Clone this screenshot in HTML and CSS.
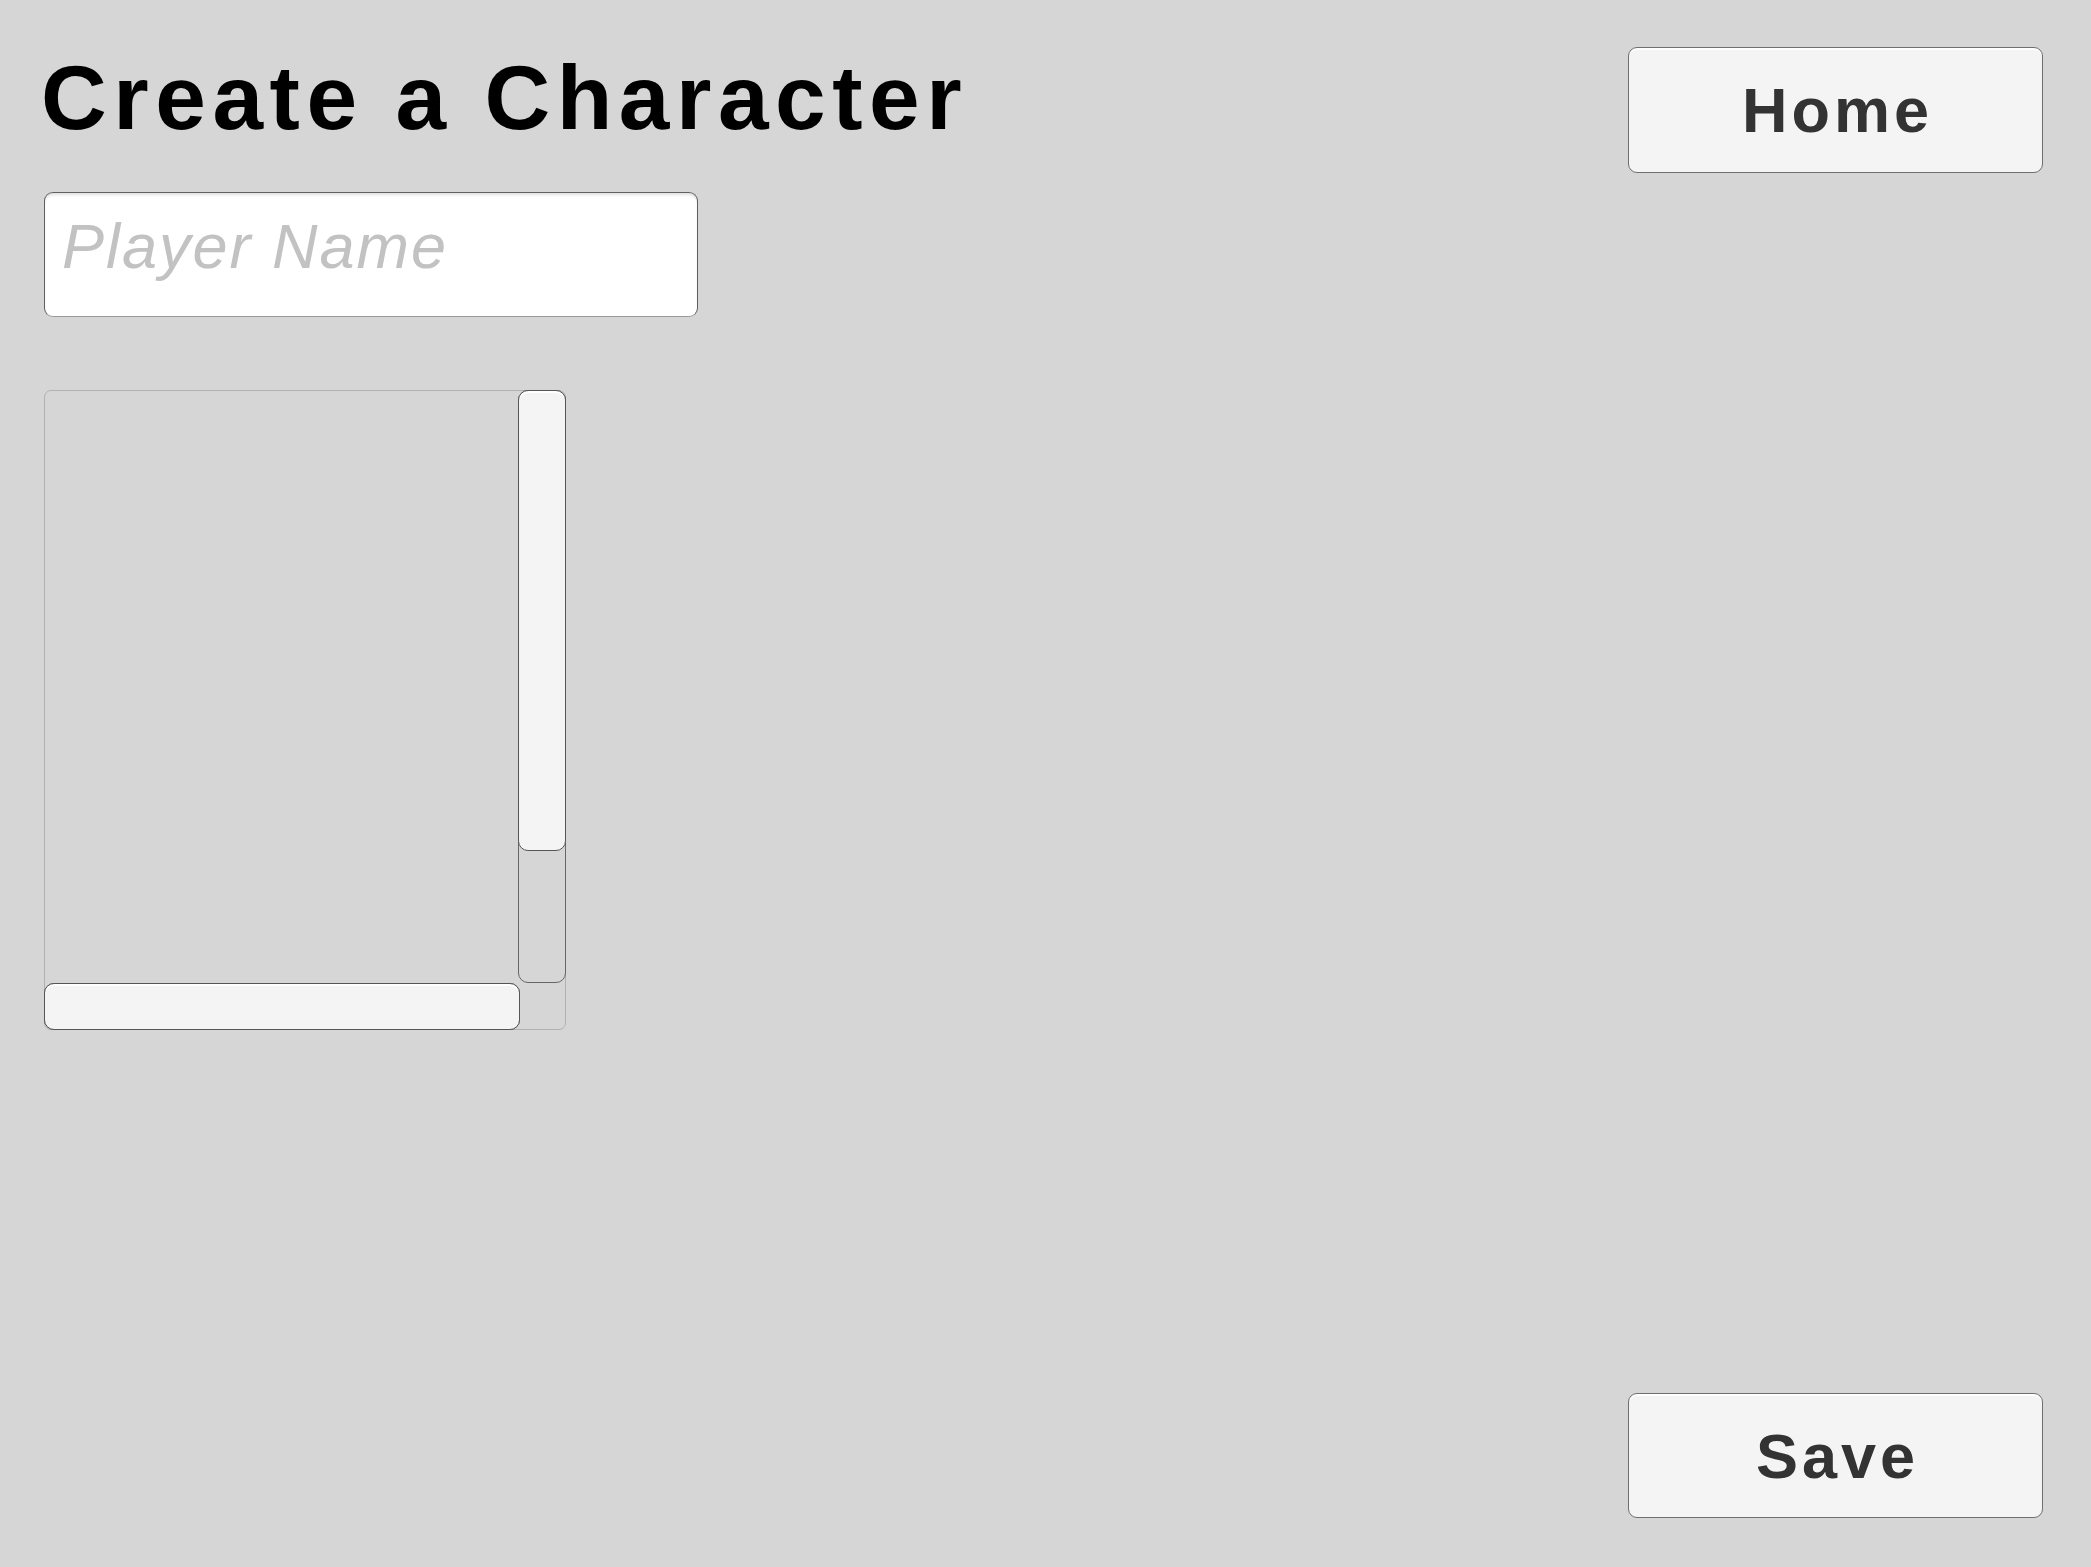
FILE: index.html
```html
<!DOCTYPE html>
<html lang="en">
<head>
    <meta charset="UTF-8">
    <meta name="viewport" content="width=device-width, initial-scale=1.0">
    <title>Create a Character</title>
    <link rel="stylesheet" href="styles.css">
</head>
<body>
    <div class="screen">
        <div class="top-row">
            <h1>Create a Character</h1>
            <button class="menu-btn home-btn">Home</button>
        </div>

        <input type="text" class="name-input" placeholder="Player Name">

        <!-- list of character options, empty for now -->
        <div class="scroll-view">
            <div class="viewport"></div>
            <div class="scrollbar vertical">
                <div class="thumb"></div>
            </div>
            <div class="scrollbar horizontal">
                <div class="thumb"></div>
            </div>
        </div>

        <div class="bottom-row">
            <button class="menu-btn save-btn">Save</button>
        </div>
    </div>
</body>
</html>
```

FILE: styles.css
```css
html, body {
    margin: 0;
    height: 100%;
}

body {
    font-family: 'Liberation Sans', Arial, sans-serif;
    background-color: #d6d6d6;
}

.screen {
    box-sizing: border-box;
    height: 100vh;
    padding: 47px 48px 49px 44px;
    display: flex;
    flex-direction: column;
    align-items: flex-start;
}

.top-row {
    width: 100%;
    display: flex;
    justify-content: space-between;
    align-items: flex-start;
}

h1 {
    margin: 5px 0 0 -3px;
    font-size: 91px;
    line-height: 91px;
    font-weight: bold;
    letter-spacing: 0.072em;
    color: #000;
}

.menu-btn {
    box-sizing: border-box;
    width: 415px;
    height: 126px;
    padding: 0 0 0 4px;
    font-family: 'Liberation Sans', Arial, sans-serif;
    font-size: 63px;
    font-weight: bold;
    letter-spacing: 4px;
    color: #333;
    background-color: #f4f4f4;
    border: 1px solid #6f6f6f;
    border-radius: 9px;
    box-shadow: inset 0 2px 0 #fff;
    cursor: pointer;
}

.save-btn {
    height: 125px;
}

.name-input {
    box-sizing: border-box;
    width: 654px;
    height: 125px;
    margin-top: 19px;
    padding: 17px 17px 34px;
    font-family: 'Liberation Sans', Arial, sans-serif;
    font-size: 63px;
    line-height: 72px;
    letter-spacing: 2px;
    color: #222;
    background: #fff;
    border: 1px solid #5f5f5f;
    border-bottom-color: #9a9a9a;
    border-radius: 9px;
    box-shadow: inset 0 3px 3px -1px rgba(0, 0, 0, 0.12);
    outline: none;
}

.name-input::placeholder {
    color: #c2c2c2;
    font-style: italic;
}

.scroll-view {
    box-sizing: border-box;
    width: 522px;
    height: 640px;
    margin-top: 73px;
    border: 1px solid #b2b2b2;
    border-radius: 7px;
    display: grid;
    grid-template-columns: 1fr 47px;
    grid-template-rows: 1fr 46px;
}

.viewport {
    grid-column: 1;
    grid-row: 1;
}

.scrollbar {
    box-sizing: border-box;
    border: 1px solid #666;
    border-radius: 10px;
    display: flex;
}

.scrollbar.vertical {
    grid-column: 2;
    grid-row: 1;
    margin: -1px -1px 0 0;
    flex-direction: column;
}

.scrollbar.horizontal {
    grid-column: 1;
    grid-row: 2;
    margin: 0 -2px -1px -1px;
}

.thumb {
    box-sizing: border-box;
    background-color: #f4f4f4;
    border: 1px solid #555;
    border-radius: 10px;
    box-shadow: inset 0 2px 0 #fff;
    margin: -1px;
}

.vertical .thumb {
    height: 78%;
}

.horizontal .thumb {
    flex: 1;
}

.bottom-row {
    width: 100%;
    margin-top: auto;
    display: flex;
    justify-content: flex-end;
}
```
